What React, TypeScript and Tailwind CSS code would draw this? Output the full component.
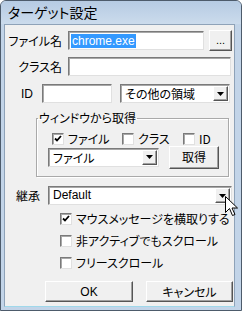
import React from "react";

const jp = "font-['Noto_Sans_CJK_JP',sans-serif] [font-feature-settings:'palt']";
const lat = "font-['Liberation_Sans','Noto_Sans_CJK_JP',sans-serif]";

const sunken =
  "border border-[#7a7a7a] border-r-[#e0e0e0] border-b-[#e0e0e0] shadow-[inset_1px_1px_0_#a8a8a8] bg-white";
const raised =
  "border border-white border-r-[#555] border-b-[#555] shadow-[inset_-1px_-1px_0_#a0a0a0] bg-[#f0f0f0]";

function Arrow() {
  return (
    <div className={`w-[15px] h-full flex items-center justify-center ${raised}`}>
      <svg width="7" height="4" viewBox="0 0 7 4">
        <path d="M0 0h7L3.5 4z" fill="#000" />
      </svg>
    </div>
  );
}

function Combo({ w, text, latin }: { w: string; text: string; latin?: boolean }) {
  return (
    <div className={`${w} h-[19px] flex items-stretch p-[1px] ${sunken}`}>
      <div className={`flex-1 pl-[3px] text-[12px] leading-[15px] ${latin ? lat : jp}`}>{text}</div>
      <Arrow />
    </div>
  );
}

function Check({ checked, label, w }: { checked?: boolean; label: string; w?: string }) {
  return (
    <div className={`flex items-center gap-[4px] ${w ?? ""}`}>
      <div className={`w-[12px] h-[12px] flex items-center justify-center ${sunken}`}>
        {checked && (
          <svg width="8" height="8" viewBox="0 0 8 8">
            <path d="M1 3.5l2 2 4-4.5" stroke="#000" strokeWidth="1.8" fill="none" />
          </svg>
        )}
      </div>
      <span className={`text-[12px] leading-[14px] ${jp}`}>{label}</span>
    </div>
  );
}

export default function App() {
  return (
    <div className="w-[242px] h-[311px] bg-[#c2d4e8] border border-[#4d5b6b] rounded-t-[6px] flex flex-col text-black overflow-hidden relative">
      <div className="h-[23px] flex items-center pl-[7px] bg-gradient-to-b from-[#b6cbe3] to-[#cbdbec]">
        <span className={`text-[14px] ${jp}`}>ターゲット設定</span>
      </div>
      <div className="flex-1 flex flex-col ml-[3px] mr-[6px] mb-[3px] bg-[#f0f0f0] border border-[#8ea2b8] border-b-[#9fd8ea]">
        {/* file name */}
        <div className="flex items-center mt-[5px] h-[21px]">
          <span className={`w-[57px] text-right text-[12px] ${jp}`}>ファイル名</span>
          <div className={`ml-[6px] w-[136px] h-[19px] flex items-center pl-[2px] ${sunken}`}>
            <span className={`bg-[#3399ff] text-white text-[12px] leading-[14px] px-[1px] ${lat}`}>chrome.exe</span>
          </div>
          <div className={`ml-[5px] w-[23px] h-[21px] flex items-center justify-center text-[11px] ${lat} ${raised}`}>...</div>
        </div>
        {/* class name */}
        <div className="flex items-center mt-[6px] h-[19px]">
          <span className={`w-[57px] text-right text-[12px] ${jp}`}>クラス名</span>
          <div className={`ml-[6px] w-[163px] h-[19px] ${sunken}`} />
        </div>
        {/* id */}
        <div className="flex items-center mt-[8px] h-[19px]">
          <span className={`w-[28px] text-right text-[12px] ${lat}`}>ID</span>
          <div className={`ml-[9px] w-[70px] h-[19px] ${sunken}`} />
          <div className="ml-[8px]">
            <Combo w="w-[110px]" text="その他の領域" />
          </div>
        </div>
        {/* group */}
        <fieldset className="ml-[31px] w-[193px] mt-[8px] border border-[#a9a9a9] shadow-[inset_1px_1px_0_#fff,1px_1px_0_#fff] pb-[8px]">
          <legend className={`ml-[1px] px-[1px] text-[12px] leading-[14px] ${jp}`}>ウィンドウから取得</legend>
          <div className="flex items-center h-[14px] mt-[7px] ml-[15px]">
            <Check checked label="ファイル" w="w-[70px]" />
            <Check label="クラス" w="w-[61px]" />
            <Check label="ID" />
          </div>
          <div className="flex items-center h-[22px] ml-[11px]">
            <Combo w="w-[111px]" text="ファイル" />
            <div className={`ml-[10px] w-[50px] h-[23px] flex items-center justify-center text-[12px] ${jp} ${raised}`}>取得</div>
          </div>
        </fieldset>
        {/* inherit */}
        <div className="flex items-center mt-[9px] h-[19px]">
          <span className={`w-[35px] text-right text-[12px] ${jp}`}>継承</span>
          <div className="ml-[8px]">
            <Combo w="w-[184px]" text="Default" latin />
          </div>
        </div>
        <div className="flex flex-col ml-[55px] mt-[3px]">
          <div className="h-[22px] flex items-center">
            <Check checked label="マウスメッセージを横取りする" />
          </div>
          <div className="h-[22px] flex items-center">
            <Check label="非アクティブでもスクロール" />
          </div>
          <div className="h-[22px] flex items-center">
            <Check label="フリースクロール" />
          </div>
        </div>
        <div className="flex items-center mt-[7px] ml-[40px] gap-[13px]">
          <div className={`w-[88px] h-[21px] flex items-center justify-center text-[12px] ${lat} ${raised}`}>OK</div>
          <div className={`w-[87px] h-[21px] flex items-center justify-center text-[12px] ${jp} ${raised}`}>キャンセル</div>
        </div>
      </div>
      {/* mouse cursor */}
      <svg className="absolute left-[224px] top-[195px]" width="13" height="21" viewBox="0 0 13 21">
        <path d="M0.5 0.5v16l4-4 3 7 2.5-1-3-6.5h5.5z" fill="#fff" stroke="#000" strokeWidth="1" />
      </svg>
    </div>
  );
}
